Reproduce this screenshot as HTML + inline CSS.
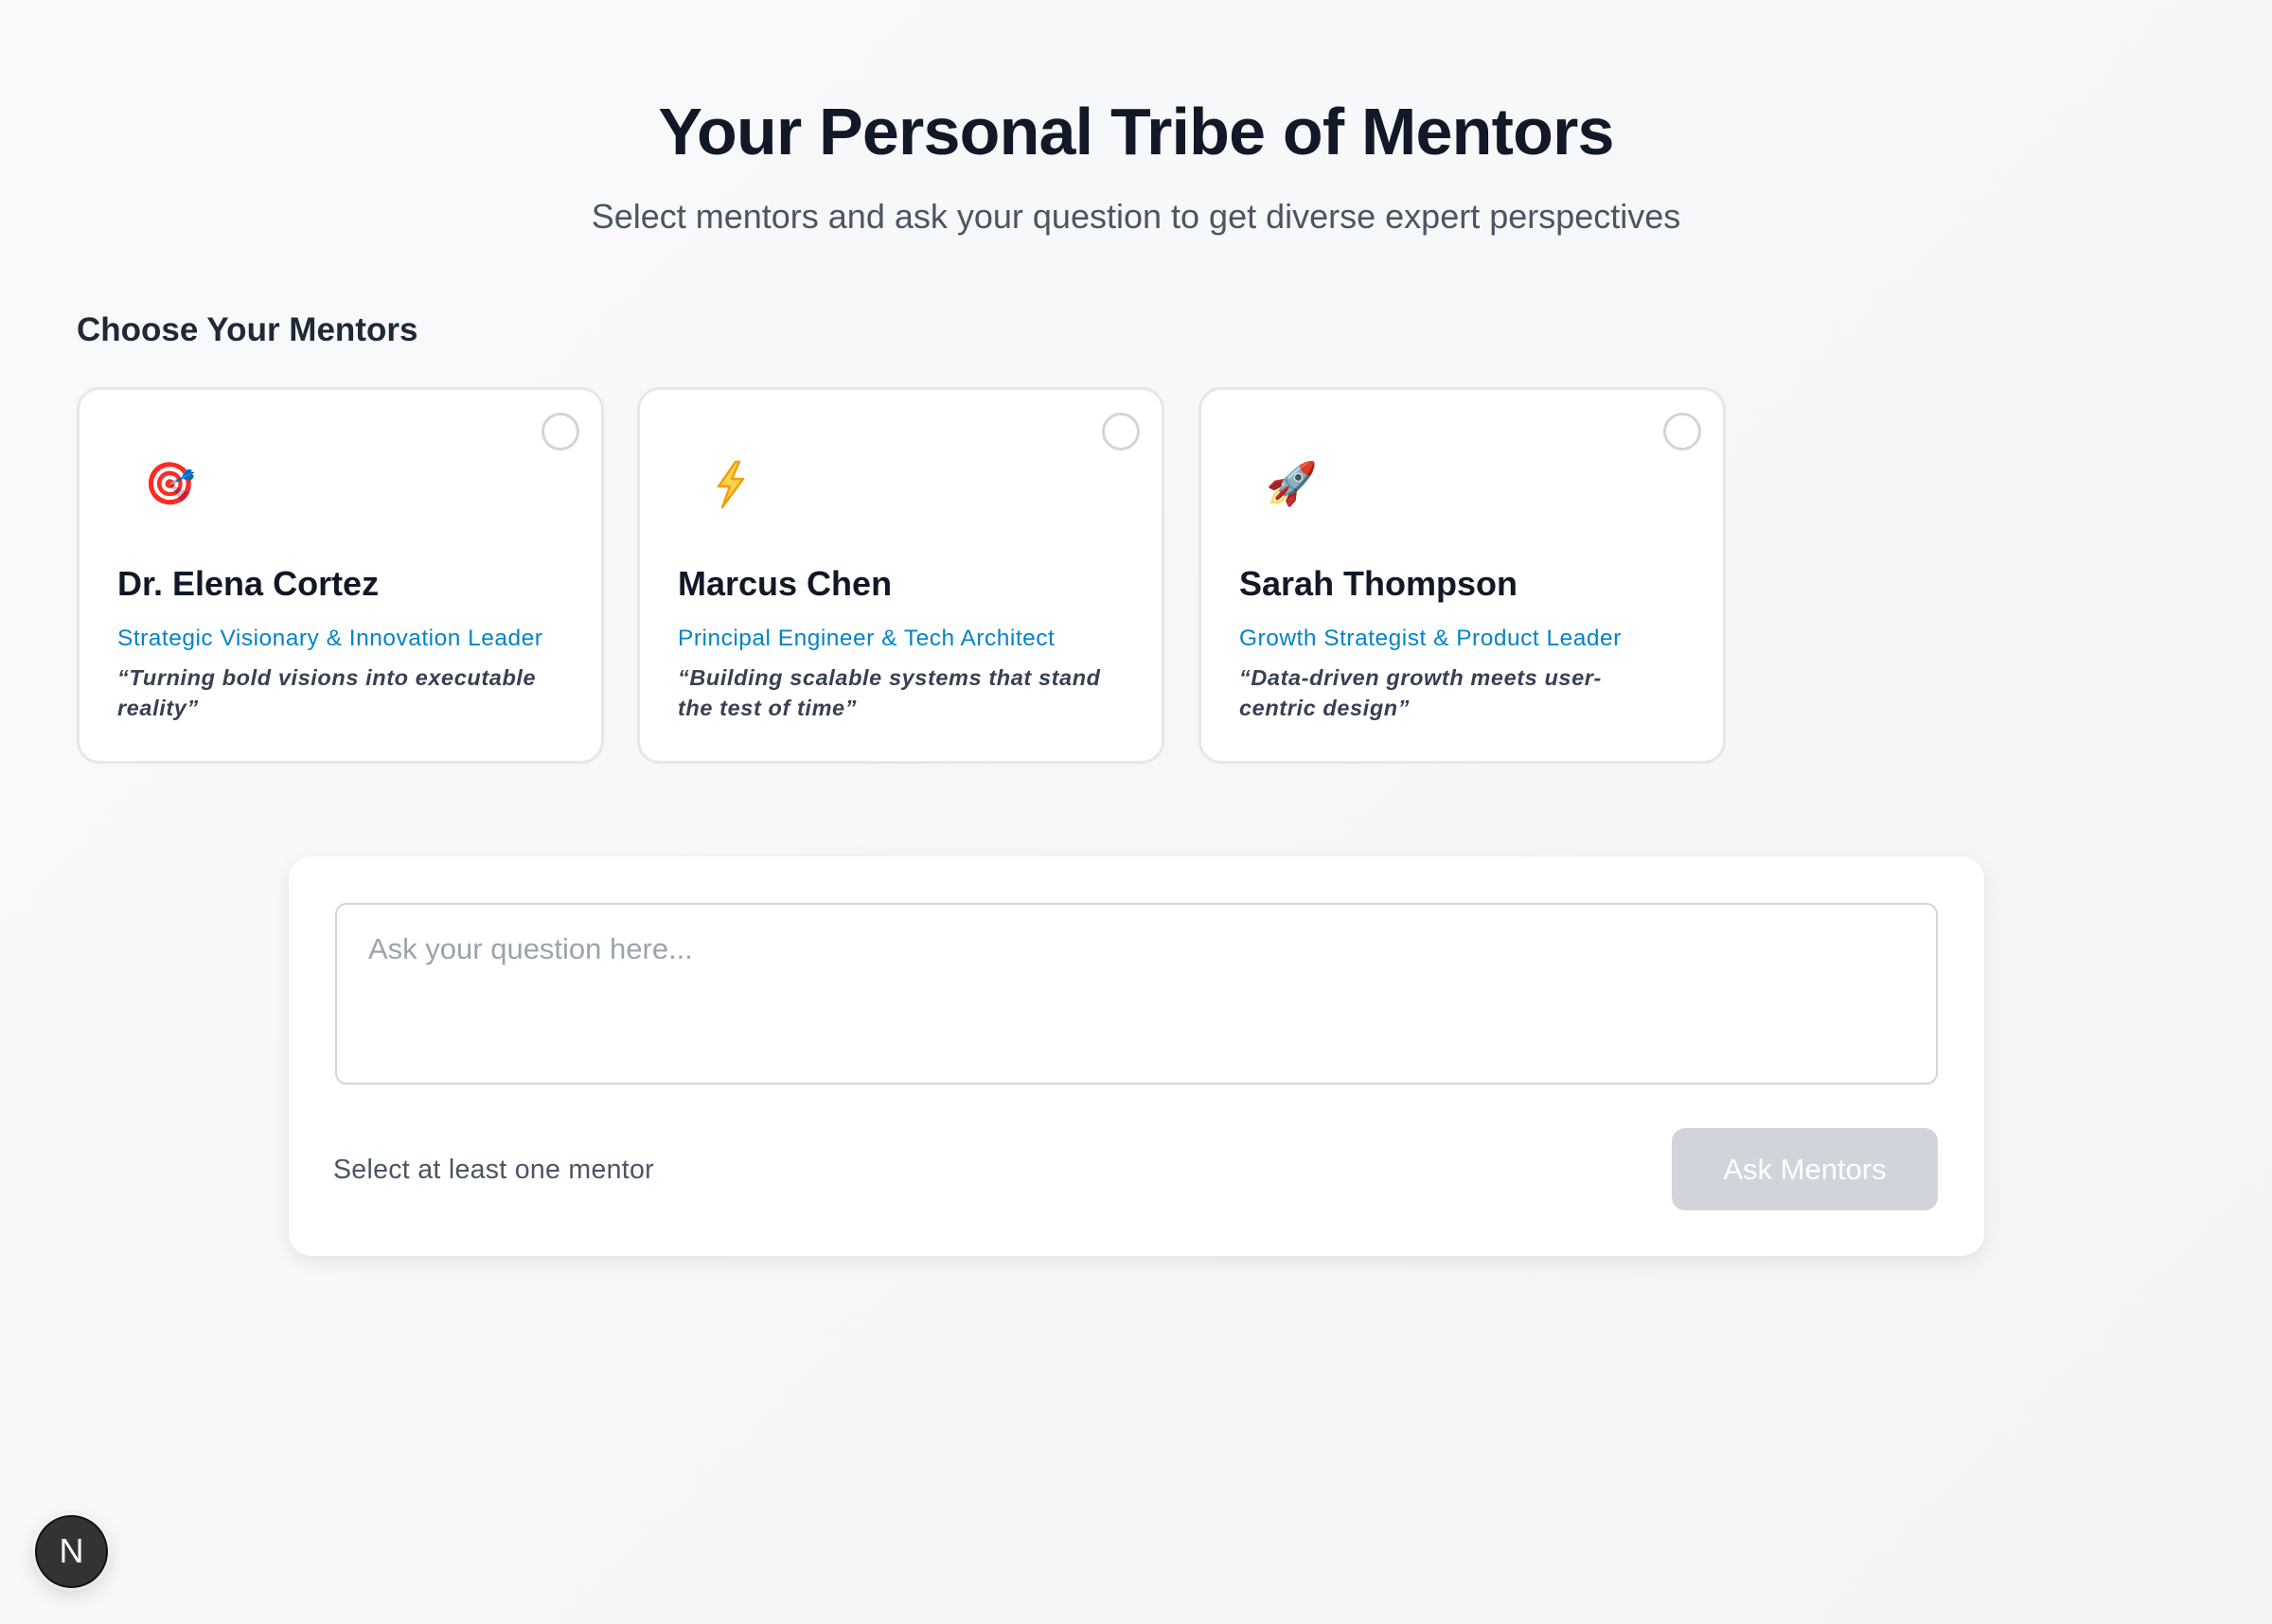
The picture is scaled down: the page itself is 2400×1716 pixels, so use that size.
<!DOCTYPE html>
<html><head><meta charset="utf-8"><style>
*{box-sizing:border-box;margin:0;padding:0}
body{width:2400px;height:1716px;background:linear-gradient(135deg,#f9fafb,#f3f4f6);font-family:"Liberation Sans","DejaVu Sans",sans-serif;position:relative;overflow:hidden}
.abs{position:absolute}
h1{position:absolute;left:0;width:2400px;text-align:center;top:96px;font-size:70px;font-weight:bold;color:#111827;line-height:86px;letter-spacing:-0.8px}
.sub{left:0;width:2400px;text-align:center;top:207px;font-size:36px;color:#4b5563;line-height:44px}
.choose{left:81px;top:327px;font-size:35px;font-weight:bold;color:#1f2937;line-height:44px}
.card{top:409px;width:557px;height:398px;background:#fff;border:3px solid #e5e7eb;border-radius:24px}
.radio{position:absolute;left:488px;top:24px;width:40px;height:40px;border:3px solid #d1d5db;border-radius:50%}
.emoji{position:absolute;left:68px;top:72px;font-size:44px;line-height:56px}
.name{position:absolute;left:40px;top:182px;font-size:36px;font-weight:bold;color:#111827;line-height:46px}
.role{position:absolute;left:40px;top:247px;font-size:24.5px;color:#0284c7;line-height:32px;letter-spacing:0.5px}
.quote{position:absolute;left:40px;top:288px;width:460px;font-size:23.5px;font-style:italic;font-weight:bold;color:#374151;line-height:32px;letter-spacing:0.6px}
.panel{left:305px;top:905px;width:1791px;height:422px;background:#fff;border-radius:24px;box-shadow:0 6px 20px rgba(0,0,0,0.08)}
.ta{left:354px;top:954px;width:1693px;height:192px;border:2px solid #d1d5db;border-radius:12px;padding:29px 33px;font-size:31px;color:#9ca3af}
.hint{left:352px;top:1220px;font-size:28.5px;color:#4b5563;letter-spacing:0.3px}
.btn{left:1766px;top:1192px;width:281px;height:87px;background:#d1d5db;border-radius:14px;color:#fff;font-size:31px;text-align:center;line-height:87px}
.nb{left:37px;top:1601px;width:77px;height:77px;border-radius:50%;background:#333;border:2px solid #111;box-shadow:0 0 0 3px rgba(255,255,255,0.3),0 6px 20px rgba(0,0,0,0.15);color:#fff;font-size:36px;text-align:center;line-height:72px}
</style></head><body>
<h1>Your Personal Tribe of Mentors</h1>
<div class="abs sub">Select mentors and ask your question to get diverse expert perspectives</div>
<div class="abs choose">Choose Your Mentors</div>

<div class="abs card" style="left:81px"><div class="radio"></div><div class="emoji">🎯</div><div class="name">Dr. Elena Cortez</div><div class="role">Strategic Visionary &amp; Innovation Leader</div><div class="quote">“Turning bold visions into executable reality”</div></div>
<div class="abs card" style="left:673px"><div class="radio"></div><svg style="position:absolute;left:75px;top:74px" width="40" height="52" viewBox="0 0 40 52"><path d="M26 2 L8 28 L20 28 L12 50 L34 20 L22 20 L30 2 Z" fill="#fcd34d" stroke="#f59e0b" stroke-width="2.5" stroke-linejoin="round"/></svg><div class="name">Marcus Chen</div><div class="role">Principal Engineer &amp; Tech Architect</div><div class="quote">“Building scalable systems that stand the test of time”</div></div>
<div class="abs card" style="left:1266px"><div class="radio"></div><div class="emoji">🚀</div><div class="name">Sarah Thompson</div><div class="role">Growth Strategist &amp; Product Leader</div><div class="quote">“Data-driven growth meets user-centric design”</div></div>

<div class="abs panel"></div>
<div class="abs ta">Ask your question here...</div>
<div class="abs hint">Select at least one mentor</div>
<div class="abs btn">Ask Mentors</div>
<div class="abs nb">N</div>
</body></html>
